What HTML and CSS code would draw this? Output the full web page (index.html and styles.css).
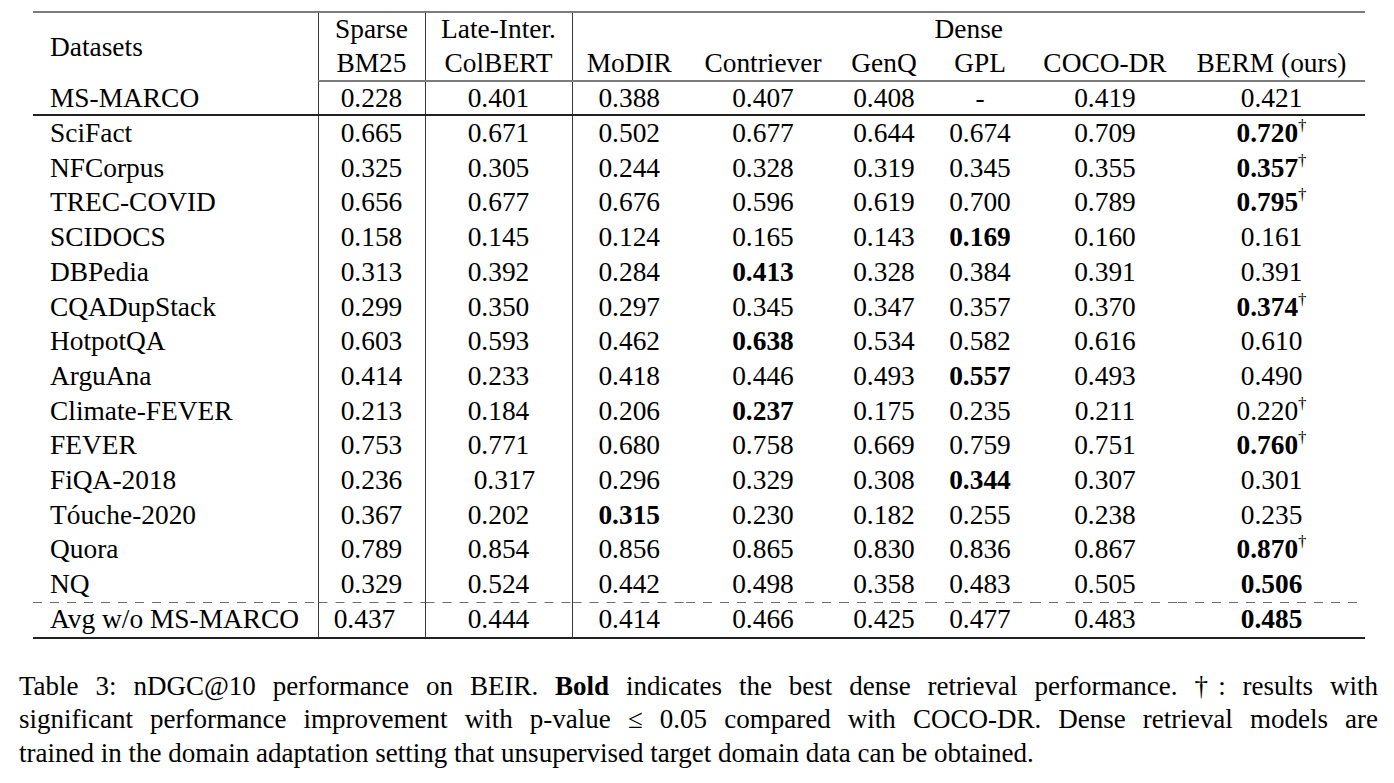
FILE: index.html
```html
<!DOCTYPE html>
<html>
<head>
<meta charset="utf-8">
<link rel="stylesheet" href="styles.css">
</head>
<body>
<div class="page">
  <table class="results">
    <colgroup>
      <col class="c-ds"><col class="c-sp"><col class="c-li">
      <col class="c-modir"><col class="c-contr"><col class="c-genq"><col class="c-gpl"><col class="c-coco"><col class="c-berm">
    </colgroup>
    <thead>
      <tr class="h1">
        <th rowspan="2" class="ds sep">Datasets</th>
        <th class="sep">Sparse</th>
        <th class="sep">Late-Inter.</th>
        <th colspan="6">Dense</th>
      </tr>
      <tr class="h2">
        <th class="sep">BM25</th>
        <th class="sep">ColBERT</th>
        <th>MoDIR</th>
        <th>Contriever</th>
        <th>GenQ</th>
        <th>GPL</th>
        <th>COCO-DR</th>
        <th>BERM (ours)</th>
      </tr>
    </thead>
    <tbody class="msm">
      <tr><td class="ds sep">MS-MARCO</td><td class="sep">0.228</td><td class="sep">0.401</td><td>0.388</td><td>0.407</td><td>0.408</td><td>-</td><td>0.419</td><td>0.421</td></tr>
    </tbody>
    <tbody class="beir">
      <tr><td class="ds sep">SciFact</td><td class="sep">0.665</td><td class="sep">0.671</td><td>0.502</td><td>0.677</td><td>0.644</td><td>0.674</td><td>0.709</td><td><b>0.720</b><sup class="dag">†</sup></td></tr>
      <tr><td class="ds sep">NFCorpus</td><td class="sep">0.325</td><td class="sep">0.305</td><td>0.244</td><td>0.328</td><td>0.319</td><td>0.345</td><td>0.355</td><td><b>0.357</b><sup class="dag">†</sup></td></tr>
      <tr><td class="ds sep">TREC-COVID</td><td class="sep">0.656</td><td class="sep">0.677</td><td>0.676</td><td>0.596</td><td>0.619</td><td>0.700</td><td>0.789</td><td><b>0.795</b><sup class="dag">†</sup></td></tr>
      <tr><td class="ds sep">SCIDOCS</td><td class="sep">0.158</td><td class="sep">0.145</td><td>0.124</td><td>0.165</td><td>0.143</td><td><b>0.169</b></td><td>0.160</td><td>0.161</td></tr>
      <tr><td class="ds sep">DBPedia</td><td class="sep">0.313</td><td class="sep">0.392</td><td>0.284</td><td><b>0.413</b></td><td>0.328</td><td>0.384</td><td>0.391</td><td>0.391</td></tr>
      <tr><td class="ds sep">CQADupStack</td><td class="sep">0.299</td><td class="sep">0.350</td><td>0.297</td><td>0.345</td><td>0.347</td><td>0.357</td><td>0.370</td><td><b>0.374</b><sup class="dag">†</sup></td></tr>
      <tr><td class="ds sep">HotpotQA</td><td class="sep">0.603</td><td class="sep">0.593</td><td>0.462</td><td><b>0.638</b></td><td>0.534</td><td>0.582</td><td>0.616</td><td>0.610</td></tr>
      <tr><td class="ds sep">ArguAna</td><td class="sep">0.414</td><td class="sep">0.233</td><td>0.418</td><td>0.446</td><td>0.493</td><td><b>0.557</b></td><td>0.493</td><td>0.490</td></tr>
      <tr><td class="ds sep">Climate-FEVER</td><td class="sep">0.213</td><td class="sep">0.184</td><td>0.206</td><td><b>0.237</b></td><td>0.175</td><td>0.235</td><td>0.211</td><td>0.220<sup class="dag">†</sup></td></tr>
      <tr><td class="ds sep">FEVER</td><td class="sep">0.753</td><td class="sep">0.771</td><td>0.680</td><td>0.758</td><td>0.669</td><td>0.759</td><td>0.751</td><td><b>0.760</b><sup class="dag">†</sup></td></tr>
      <tr><td class="ds sep">FiQA-2018</td><td class="sep">0.236</td><td class="sep nudge-r">0.317</td><td>0.296</td><td>0.329</td><td>0.308</td><td><b>0.344</b></td><td>0.307</td><td>0.301</td></tr>
      <tr><td class="ds sep">Tóuche-2020</td><td class="sep">0.367</td><td class="sep">0.202</td><td><b>0.315</b></td><td>0.230</td><td>0.182</td><td>0.255</td><td>0.238</td><td>0.235</td></tr>
      <tr><td class="ds sep">Quora</td><td class="sep">0.789</td><td class="sep">0.854</td><td>0.856</td><td>0.865</td><td>0.830</td><td>0.836</td><td>0.867</td><td><b>0.870</b><sup class="dag">†</sup></td></tr>
      <tr><td class="ds sep">NQ</td><td class="sep">0.329</td><td class="sep">0.524</td><td>0.442</td><td>0.498</td><td>0.358</td><td>0.483</td><td>0.505</td><td><b>0.506</b></td></tr>
    </tbody>
    <tfoot class="avg">
      <tr><td class="ds sep">Avg w/o MS-MARCO</td><td class="sep nudge-l">0.437</td><td class="sep">0.444</td><td>0.414</td><td>0.466</td><td>0.425</td><td>0.477</td><td>0.483</td><td><b>0.485</b></td></tr>
    </tfoot>
  </table>
  <div class="caption">
    <div class="cl just">Table 3: nDGC@10 performance on BEIR. <b>Bold</b> indicates the best dense retrieval performance. †: results with</div>
    <div class="cl just">significant performance improvement with p-value ≤ 0.05 compared with COCO-DR. Dense retrieval models are</div>
    <div class="cl">trained in the domain adaptation setting that unsupervised target domain data can be obtained.</div>
  </div>
</div>
</body>
</html>
```

FILE: styles.css
```css
html, body {
  margin: 0;
  padding: 0;
  background: #ffffff;
}

.page {
  width: 1394px;
  height: 783px;
  font-family: "Liberation Serif", "Times New Roman", serif;
  color: #000;
  padding-top: 11px;
  box-sizing: border-box;
}

.results {
  margin-left: 33px;
  border-collapse: collapse;
  table-layout: fixed;
  width: 1332px;
  font-size: 27.4px;
  border-top: 2px solid #7c7c7c;
}

.c-ds { width: 285px; }
.c-sp { width: 107px; }
.c-li { width: 147px; }
.c-modir { width: 114px; }
.c-contr { width: 154px; }
.c-genq { width: 88px; }
.c-gpl { width: 104px; }
.c-coco { width: 146px; }
.c-berm { width: 187px; }

.results th,
.results td {
  padding: 0;
  font-weight: normal;
  text-align: center;
  white-space: nowrap;
  vertical-align: middle;
}

.results .ds {
  text-align: left;
  padding-left: 17px;
}

.results .sep {
  border-right: 1px solid #3a3a3a;
}

.h1 th {
  height: 33px;
  line-height: 33px;
}

.h2 th {
  height: 34px;
  line-height: 34px;
  border-bottom: 2px solid #7c7c7c;
}

.msm td {
  height: 32px;
  line-height: 32px;
  border-bottom: 2px solid #222;
}

.beir td {
  height: 34.7px;
  line-height: 34.7px;
}

.avg td {
  height: 35px;
  line-height: 35px;
  border-bottom: 2px solid #222;
  background-image: linear-gradient(to right, #6e6e6e 0, #6e6e6e 9px, transparent 9px, transparent 17px);
  background-size: 17px 1px;
  background-repeat: repeat-x;
  background-position: 0 0;
}

.nudge-r {
  padding-left: 12px !important;
}

.nudge-l {
  padding-right: 14px !important;
}

.dag {
  font-size: 17px;
  line-height: 0;
  vertical-align: 11px;
  font-weight: normal;
}

.caption {
  margin-top: 31px;
  margin-left: 19px;
  width: 1359px;
  font-size: 27px;
  line-height: 33.5px;
}

.cl {
  white-space: nowrap;
}

.cl.just {
  text-align: justify;
  text-align-last: justify;
  white-space: normal;
}
```
